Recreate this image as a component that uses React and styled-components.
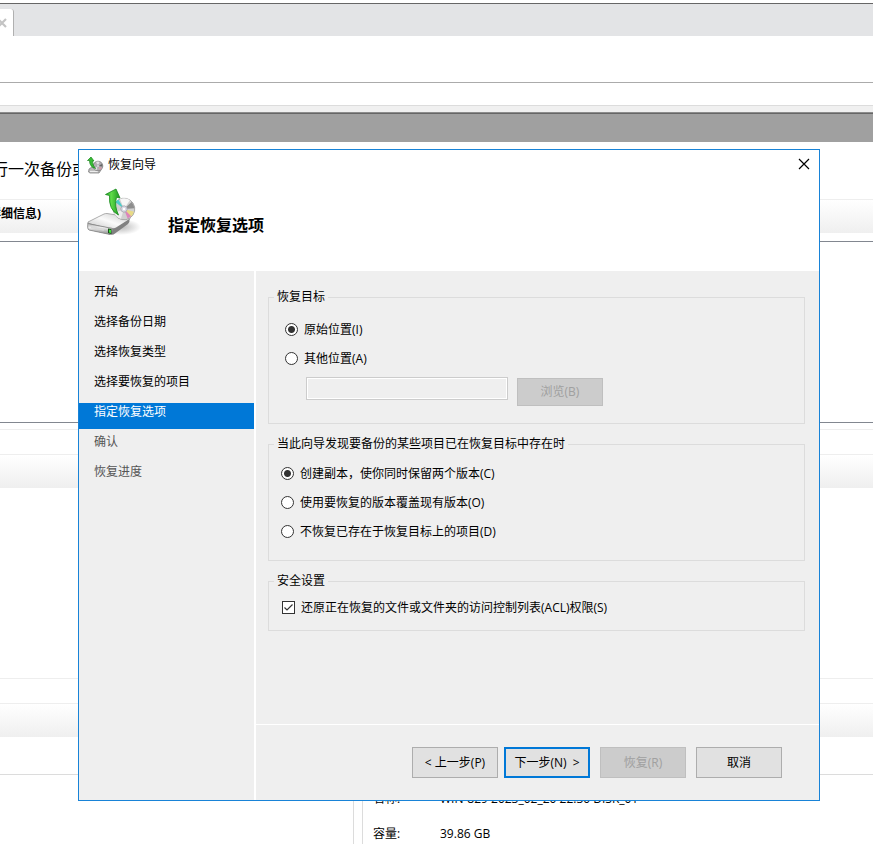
import { useState } from "react";
import styled, { createGlobalStyle, css } from "styled-components";

const GlobalStyle = createGlobalStyle`
  * {
    box-sizing: border-box;
  }

  html, body, #root {
    height: 100%;
  }

  body {
    margin: 0;
    overflow: hidden;
    background: #fff;
    color: #000;
    font: 12px/16px "Open Sans", "Noto Sans CJK SC", sans-serif;
  }

  button, input {
    font: inherit;
  }
`;

/* console window behind the wizard */

const Page = styled.div`
  position: relative;
  height: 100%;
  overflow: hidden;
`;

const TabStrip = styled.div`
  display: flex;
  align-items: flex-end;
  height: 33px;
  margin-top: 3px;
  border-top: 1px solid #666;
  background: #e3e4e6;
`;

const Tab = styled.div`
  display: flex;
  align-items: center;
  justify-content: flex-end;
  width: 14px;
  height: 27px;
  padding-right: 6px;
  border-right: 1px solid #b0b0b0;
  border-radius: 0 3px 0 0;
  background: #fff;
  overflow: hidden;

  svg {
    flex-shrink: 0;
  }
`;

const AddressBar = styled.div`
  height: 47px;
  border-bottom: 1px solid #ababab;
`;

const MenuBar = styled.div`
  height: 23px;
  border-bottom: 1px solid #dcdcdc;
`;

const TitleBand = styled.div`
  height: 36px;
  border-top: 6px solid #f0f0f0;
  background: linear-gradient(#8c8c8c 1px, #666 1px, #666 2px, #a0a0a0 2px);
`;

const Summary = styled.p`
  height: 57px;
  margin: 0;
  padding-top: 15px;
  font-size: 16px;
  line-height: 24px;
  white-space: nowrap;
`;

const ClippedText = styled.span`
  display: flex;
  justify-content: flex-end;
  width: ${(props) => props.$width}px;
`;

const SectionBar = styled.div`
  height: 34px;
  padding-top: 6px;
  border-top: 1px solid #eee;
  background: linear-gradient(#fff, #efefef);
  font-weight: 700;
  white-space: nowrap;
`;

const Pane = styled.div`
  height: ${(props) => props.$height}px;
  border-bottom: 1px solid ${(props) => props.$end || "transparent"};
`;

const ListPane = styled(Pane)`
  margin: 8px 0 6px;
  border-top: 1px solid #828790;
`;

const Gap = styled.div`
  height: 25px;
  border-top: 1px solid #eee;
`;

const Details = styled.div`
  display: flex;
  gap: 8px;
`;

const DetailsSide = styled.div`
  flex: 0 0 354px;
  height: 80px;
  border-right: 1px solid #dcdcdc;
`;

const DetailsList = styled.dl`
  display: grid;
  flex: 1;
  grid-template-columns: 67px 1fr;
  align-content: start;
  row-gap: 19px;
  margin: 0;
  padding: 16px 0 0 10px;
  border-left: 1px solid #dcdcdc;
  white-space: nowrap;

  dd {
    margin: 0;
  }
`;

/* wizard */

const Overlay = styled.div`
  position: absolute;
  inset: 0;
  padding: 149px 53px 43px 78px;
`;

const Dialog = styled.form`
  display: flex;
  flex-direction: column;
  height: 100%;
  min-height: 560px;
  border: 1px solid #1883d7;
  background: #fff;
`;

const TitleBar = styled.header`
  display: flex;
  align-items: center;
  height: 30px;
  padding: 0 8px;
  gap: 4px;
`;

const CloseButton = styled.button`
  display: flex;
  margin-left: auto;
  padding: 0 1px 2px;
  border: none;
  background: none;
`;

const Banner = styled.div`
  display: flex;
  gap: 27px;
  height: 91px;
  padding: 8px;
`;

const Heading = styled.h1`
  margin: 25px 0 0;
  font-size: 16px;
  line-height: 24px;
`;

const Body = styled.div`
  display: flex;
  flex: 1;
  gap: 2px;
`;

const Steps = styled.ol`
  flex: 0 0 175px;
  margin: 0;
  padding: 12px 0 0;
  background: #efefef;
  list-style: none;
`;

const Step = styled.li`
  height: 26px;
  margin-bottom: 4px;
  padding: 1px 0 0 15px;
  color: ${(props) => (props.$state === "todo" ? "#555" : "#000")};

  ${(props) =>
    props.$state === "current" &&
    css`
      background: #0078d7;
      color: #fff;
    `}
`;

const Main = styled.div`
  display: flex;
  flex: 1;
  flex-direction: column;
  gap: 1px;
`;

const Content = styled.div`
  display: flex;
  flex: 1;
  flex-direction: column;
  gap: 12px;
  padding: 18px 14px 0 12px;
  background: #efefef;
`;

const Group = styled.fieldset`
  min-width: 0;
  margin: 0;
  padding: 0;
  border: 1px solid #dcdcdc;
`;

const Legend = styled.legend`
  margin-left: 5px;
  padding: 0 3px;
`;

const GroupBody = styled.div`
  height: ${(props) => props.$height}px;
  padding: ${(props) => props.$padding};
`;

const Option = styled.label`
  display: flex;
  align-items: flex-start;
  gap: 6px;
  width: fit-content;
  margin-bottom: 13px;
  white-space: nowrap;
`;

const Radio = styled.input`
  width: 13px;
  height: 13px;
  margin: 1px 0 0;
  border: 1px solid #333;
  border-radius: 50%;
  background: #fff;
  appearance: none;

  &:checked {
    background: radial-gradient(circle, #333 3px, #fff 4px);
  }
`;

const CheckWrap = styled.span`
  display: grid;
  margin-top: 1px;

  > * {
    grid-area: 1 / 1;
  }

  svg {
    pointer-events: none;
  }
`;

const Checkbox = styled.input`
  width: 13px;
  height: 13px;
  margin: 0;
  border: 1px solid #333;
  background: #fff;
  appearance: none;
`;

const PathRow = styled.div`
  display: flex;
  gap: 9px;
  margin: -3px 0 0 21px;
`;

const PathInput = styled.input`
  width: 202px;
  height: 23px;
  border: 1px solid #ccc;
  outline: 1px solid #fff;
  outline-offset: -2px;
  background: #efefef;
`;

const Button = styled.button`
  width: 86px;
  height: 31px;
  padding: 0;
  border: ${(props) => (props.$primary ? "2px solid #0078d7" : "1px solid #adadad")};
  background: #e1e1e1;
  color: #000;
  white-space: pre;

  &:disabled {
    border-color: #bfbfbf;
    background: #ccc;
    color: #a0a0a0;
  }
`;

const BrowseButton = styled(Button)`
  height: 28px;
  margin-top: 1px;
`;

const Footer = styled.footer`
  display: flex;
  justify-content: flex-end;
  gap: 10px;
  height: 75px;
  padding: 22px 37px 0 0;
  background: #efefef;
`;

const FooterPair = styled.div`
  display: flex;
  gap: 6px;
`;

const DriveIcon = () => (
  <svg width="54" height="54" viewBox="0 0 54 54" aria-hidden="true">
    <defs>
      <linearGradient id="driveTop" x1="0" y1="1" x2="1" y2="0">
        <stop offset="0" stopColor="#c4c4c4" />
        <stop offset="0.5" stopColor="#fafafa" />
        <stop offset="1" stopColor="#c8c8c8" />
      </linearGradient>
      <linearGradient id="driveFront" x1="0" y1="0" x2="0" y2="1">
        <stop offset="0" stopColor="#aaa" />
        <stop offset="0.4" stopColor="#ececec" />
        <stop offset="1" stopColor="#888" />
      </linearGradient>
      <linearGradient id="arrow" x1="0" y1="0" x2="1" y2="0">
        <stop offset="0" stopColor="#27a82a" />
        <stop offset="0.4" stopColor="#5fdc48" />
        <stop offset="1" stopColor="#1c941e" />
      </linearGradient>
      <radialGradient id="shadow">
        <stop offset="0" stopColor="#888" stopOpacity="0.6" />
        <stop offset="1" stopColor="#888" stopOpacity="0" />
      </radialGradient>
    </defs>
    <ellipse cx="34" cy="39" rx="20" ry="8" fill="url(#shadow)" />
    <path d="M1 34L17 26Q18 25.500 20 25.500L42 29Q44 30 42 32L29 41L3 37Q0 36 1 34Z" fill="url(#driveTop)" stroke="#999" strokeWidth="0.800" />
    <path d="M1 35Q0 41 2 42L23 46.500Q26 47.500 28 45.500L41 36Q43 34 42.500 31L29 39.500Q27 41 24 40.500Z" fill="#808080" />
    <path d="M1 35Q0 41 2 42L23 46.500Q25 46 25.500 40.500L3 36Z" fill="url(#driveFront)" stroke="#888" strokeWidth="0.800" />
    <path d="M4 39L17 41.700" stroke="#d8d8d8" strokeWidth="2" />
    <path d="M21 40.500L24.500 41V46L21 45Z" fill="#174d17" />
    <path d="M22 41.500L24 42V45L22 44.500Z" fill="#3fe43b" />
    <g transform="rotate(12 37 21)">
      <circle cx="37" cy="21" r="10.800" fill="#d0d0d0" stroke="#a0a0a0" strokeWidth="0.800" />
      <path d="M37 21L31 12Q36 9 41 11Z" fill="#f6f6f6" />
      <path d="M37 21L43 12.500Q46 15 47 18Z" fill="#8d8d8d" />
      <path d="M37 21L47.300 21.500Q47 25 45 27.500Z" fill="#e8da86" />
      <path d="M37 21L45.500 26.500L42.500 29.500Z" fill="#dc86bb" />
      <path d="M37 21L28 27Q31 31 36 31.300Z" fill="#eee" />
      <path d="M37 21L27 16L29.500 13Z" fill="#4ccdca" />
      <circle cx="37" cy="21" r="3.200" fill="#d8d8e4" stroke="#a0a0a8" strokeWidth="0.700" />
      <circle cx="37" cy="21" r="1.200" fill="#fff" />
    </g>
    <path d="M18.500 6.500L29 1L33 10L29.500 9.300Q27 18 31.500 27Q21.500 22 22.500 7.500Z" fill="url(#arrow)" stroke="#17881b" strokeWidth="0.800" strokeLinejoin="round" />
  </svg>
);

const SmallDriveIcon = () => (
  <svg width="17" height="18" viewBox="0 0 17 18" aria-hidden="true">
    <path d="M2 13L5 11H14V14L12 17H3L1.500 16Z" fill="#b8b8b8" stroke="#777" strokeWidth="0.700" />
    <path d="M3 15.500H11" stroke="#eee" strokeWidth="1.200" />
    <circle cx="11" cy="10" r="4.800" fill="#b2aeb2" stroke="#7c7c7c" strokeWidth="0.800" />
    <path d="M11 10L9 5.800Q11 5 12.500 5.800Z" fill="#e2e2e2" />
    <path d="M11 10L15 8L15.300 10.500Z" fill="#666" />
    <path d="M11 10L15 12L13 14Z" fill="#d59aa9" />
    <path d="M11 10L7 12.500L9.500 14.300Z" fill="#e0e0e0" />
    <circle cx="11" cy="10" r="1.300" fill="#efeff5" stroke="#888" strokeWidth="0.500" />
    <path d="M0.500 4.500L4 1L7 5H5.500Q5.500 9.500 8.500 12.500Q2.500 11 2.500 4.500Z" fill="#38bd35" stroke="#168319" strokeWidth="0.700" strokeLinejoin="round" />
  </svg>
);

const steps = [
  { label: "开始", state: "done" },
  { label: "选择备份日期", state: "done" },
  { label: "选择恢复类型", state: "done" },
  { label: "选择要恢复的项目", state: "done" },
  { label: "指定恢复选项", state: "current" },
  { label: "确认", state: "todo" },
  { label: "恢复进度", state: "todo" },
];

const targets = [
  { value: "original", label: "原始位置(I)" },
  { value: "other", label: "其他位置(A)" },
];

const conflicts = [
  { value: "copy", label: "创建副本，使你同时保留两个版本(C)" },
  { value: "overwrite", label: "使用要恢复的版本覆盖现有版本(O)" },
  { value: "skip", label: "不恢复已存在于恢复目标上的项目(D)" },
];

const RadioList = ({ name, options, value, onChange }) =>
  options.map((option) => (
    <Option key={option.value}>
      <Radio
        type="radio"
        name={name}
        value={option.value}
        checked={value === option.value}
        onChange={() => onChange(option.value)}
      />
      {option.label}
    </Option>
  ));

const Console = () => (
  <>
    <TabStrip>
      <Tab>
        <svg width="10" height="10" viewBox="0 0 10 10">
          <path d="M1 1L9 9M9 1L1 9" stroke="#c4c4c4" strokeWidth="2.200" />
        </svg>
      </Tab>
    </TabStrip>
    <AddressBar />
    <MenuBar />
    <TitleBand />
    <Summary>
      <ClippedText $width={88}>行一次备份或</ClippedText>
    </Summary>
    <SectionBar>
      <ClippedText $width={41}>详细信息)</ClippedText>
    </SectionBar>
    <ListPane $height={182} $end="#828790" />
    <Gap />
    <SectionBar />
    <Pane $height={190} />
    <Gap />
    <SectionBar />
    <Pane $height={38} $end="#dcdcdc" />
    <Details>
      <DetailsSide />
      <DetailsList>
        <dt>名称:</dt>
        <dd>WIN-829 2023_02_20 22:30 DISK_01</dd>
        <dt>容量:</dt>
        <dd>39.86 GB</dd>
      </DetailsList>
    </Details>
  </>
);

const App = () => {
  const [target, setTarget] = useState("original");
  const [conflict, setConflict] = useState("copy");
  const [keepAcl, setKeepAcl] = useState(true);

  return (
    <Page>
      <GlobalStyle />
      <Console />
      <Overlay>
        <Dialog onSubmit={(e) => e.preventDefault()}>
          <TitleBar>
            <SmallDriveIcon />
            <span>恢复向导</span>
            <CloseButton type="button" aria-label="关闭">
              <svg width="12" height="12" viewBox="0 0 12 12">
                <path d="M1 1L11 11M11 1L1 11" stroke="#000" strokeWidth="1.200" />
              </svg>
            </CloseButton>
          </TitleBar>
          <Banner>
            <DriveIcon />
            <Heading>指定恢复选项</Heading>
          </Banner>
          <Body>
            <Steps>
              {steps.map((step) => (
                <Step key={step.label} $state={step.state}>
                  {step.label}
                </Step>
              ))}
            </Steps>
            <Main>
              <Content>
                <Group>
                  <Legend>恢复目标</Legend>
                  <GroupBody $height={118} $padding="17px 16px 0">
                    <RadioList name="target" options={targets} value={target} onChange={setTarget} />
                    <PathRow>
                      <PathInput type="text" aria-label="其他位置" disabled={target !== "other"} />
                      <BrowseButton type="button" disabled={target !== "other"}>
                        浏览(B)
                      </BrowseButton>
                    </PathRow>
                  </GroupBody>
                </Group>
                <Group>
                  <Legend>当此向导发现要备份的某些项目已在恢复目标中存在时</Legend>
                  <GroupBody $height={108} $padding="14px 12px 0">
                    <RadioList name="conflict" options={conflicts} value={conflict} onChange={setConflict} />
                  </GroupBody>
                </Group>
                <Group>
                  <Legend>安全设置</Legend>
                  <GroupBody $height={41} $padding="11px 13px 0">
                    <Option>
                      <CheckWrap>
                        <Checkbox type="checkbox" checked={keepAcl} onChange={(e) => setKeepAcl(e.target.checked)} />
                        {keepAcl && (
                          <svg width="13" height="13" viewBox="0 0 13 13">
                            <path d="M2.500 6.500L5 9L10.500 3.500" fill="none" stroke="#333" strokeWidth="1.200" />
                          </svg>
                        )}
                      </CheckWrap>
                      还原正在恢复的文件或文件夹的访问控制列表(ACL)权限(S)
                    </Option>
                  </GroupBody>
                </Group>
              </Content>
              <Footer>
                <FooterPair>
                  <Button type="button">{"< 上一步(P)"}</Button>
                  <Button type="submit" $primary>{"下一步(N)  >"}</Button>
                </FooterPair>
                <Button type="button" disabled>恢复(R)</Button>
                <Button type="button">取消</Button>
              </Footer>
            </Main>
          </Body>
        </Dialog>
      </Overlay>
    </Page>
  );
};

export default App;
